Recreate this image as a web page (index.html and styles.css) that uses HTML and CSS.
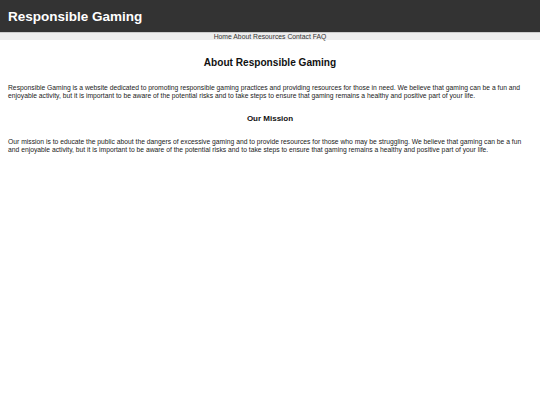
FILE: index.html
```html
<!DOCTYPE html>
<html>
<head>
<meta charset="utf-8">
<link rel="stylesheet" href="styles.css">
</head>
<body>
<header class="site-header">
  <div class="brand">Responsible Gaming</div>
</header>
<nav class="site-nav">
  <a href="#">Home</a> <a href="#">About</a> <a href="#">Resources</a> <a href="#">Contact</a> <a href="#">FAQ</a>
</nav>
<main class="content">
  <h1 class="page-title">About Responsible Gaming</h1>
  <p class="para">Responsible Gaming is a website dedicated to promoting responsible gaming practices and providing resources for those in need. We believe that gaming can be a fun and enjoyable activity, but it is important to be aware of the potential risks and to take steps to ensure that gaming remains a healthy and positive part of your life.</p>
  <h2 class="section-title">Our Mission</h2>
  <p class="para">Our mission is to educate the public about the dangers of excessive gaming and to provide resources for those who may be struggling. We believe that gaming can be a fun and enjoyable activity, but it is important to be aware of the potential risks and to take steps to ensure that gaming remains a healthy and positive part of your life.</p>
</main>
</body>
</html>
```
FILE: styles.css
```css
html, body {
  margin: 0;
  padding: 0;
  background: #fff;
  font-family: "Liberation Sans", Arial, sans-serif;
  color: #222;
}
.site-header {
  background: #333;
  height: 32px;
  display: flex;
  align-items: center;
  padding: 0 8px;
}
.brand {
  color: #fff;
  font-weight: bold;
  font-size: 13.5px;
}
.site-nav {
  background: #eee;
  border-top: 1px solid #ccc;
  text-align: center;
  font-size: 6.8px;
  line-height: 7px;
  height: 7px;
}
.site-nav a {
  color: #333;
  text-decoration: none;
}
.content {
  padding: 0 8px;
}
.page-title {
  font-size: 10.1px;
  text-align: center;
  margin: 16px 0 0;
  line-height: 13px;
  color: #111;
}
.section-title {
  font-size: 8px;
  text-align: center;
  margin: 14px 0 0;
  line-height: 10px;
  color: #111;
}
.para {
  font-size: 6.75px;
  line-height: 8px;
  margin: 15px 0 0;
}
.content .section-title + .para {
  margin-top: 14px;
}
```
